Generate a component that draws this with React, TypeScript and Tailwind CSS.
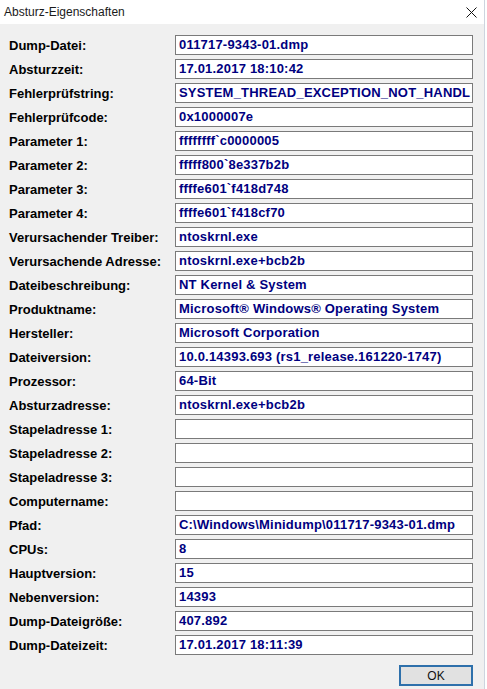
import React from 'react'

// Zeilen des Dialogs: Beschriftung und Wert
const zeilen: [string, string][] = [
  ['Dump-Datei:', '011717-9343-01.dmp'],
  ['Absturzzeit:', '17.01.2017 18:10:42'],
  ['Fehlerprüfstring:', 'SYSTEM_THREAD_EXCEPTION_NOT_HANDL'],
  ['Fehlerprüfcode:', '0x1000007e'],
  ['Parameter 1:', 'ffffffff`c0000005'],
  ['Parameter 2:', 'fffff800`8e337b2b'],
  ['Parameter 3:', 'ffffe601`f418d748'],
  ['Parameter 4:', 'ffffe601`f418cf70'],
  ['Verursachender Treiber:', 'ntoskrnl.exe'],
  ['Verursachende Adresse:', 'ntoskrnl.exe+bcb2b'],
  ['Dateibeschreibung:', 'NT Kernel & System'],
  ['Produktname:', 'Microsoft® Windows® Operating System'],
  ['Hersteller:', 'Microsoft Corporation'],
  ['Dateiversion:', '10.0.14393.693 (rs1_release.161220-1747)'],
  ['Prozessor:', '64-Bit'],
  ['Absturzadresse:', 'ntoskrnl.exe+bcb2b'],
  ['Stapeladresse 1:', ''],
  ['Stapeladresse 2:', ''],
  ['Stapeladresse 3:', ''],
  ['Computername:', ''],
  ['Pfad:', 'C:\\Windows\\Minidump\\011717-9343-01.dmp'],
  ['CPUs:', '8'],
  ['Hauptversion:', '15'],
  ['Nebenversion:', '14393'],
  ['Dump-Dateigröße:', '407.892'],
  ['Dump-Dateizeit:', '17.01.2017 18:11:39'],
]

export default function App() {
  return (
    <div className="w-[487px] h-[689px] bg-white pr-[2px] font-['Liberation_Sans',Arial,sans-serif]">
      <div className="h-full flex flex-col border-r border-[#cdd5df]">
        {/* Titelleiste */}
        <div className="h-[24px] flex items-center justify-between pl-[4px] pr-[7px] bg-white">
          <span className="text-[12px] text-[#1a1a1a]">Absturz-Eigenschaften</span>
          <svg width="11" height="11" viewBox="0 0 11 11" className="text-[#111]">
            <path d="M0.5 0.5 L10.5 10.5 M10.5 0.5 L0.5 10.5" stroke="currentColor" strokeWidth="1" fill="none" />
          </svg>
        </div>

        {/* Inhalt */}
        <div className="flex-1 bg-[#f0f0f0] pt-[9px] pl-[9px] pr-[11px] flex flex-col">
          {zeilen.map(([label, wert], i) => (
            <div key={i} className="h-[24px] flex items-center">
              <div className="w-[166px] text-[13px] font-bold text-black leading-none">{label}</div>
              <div className="w-[298px] h-[20px] border border-[#7a7a7a] bg-white px-[3px] overflow-hidden whitespace-nowrap text-[13px] font-bold text-[#000080] tracking-[0.2px] leading-[18px]">
                {wert}
              </div>
            </div>
          ))}

          <div className="flex justify-end mt-[8px]">
            <button className="w-[74px] h-[21px] border-2 border-[#2e70ab] bg-[#e1e1e1] text-[12px] text-[#111] leading-none">
              OK
            </button>
          </div>
        </div>
      </div>
    </div>
  )
}
